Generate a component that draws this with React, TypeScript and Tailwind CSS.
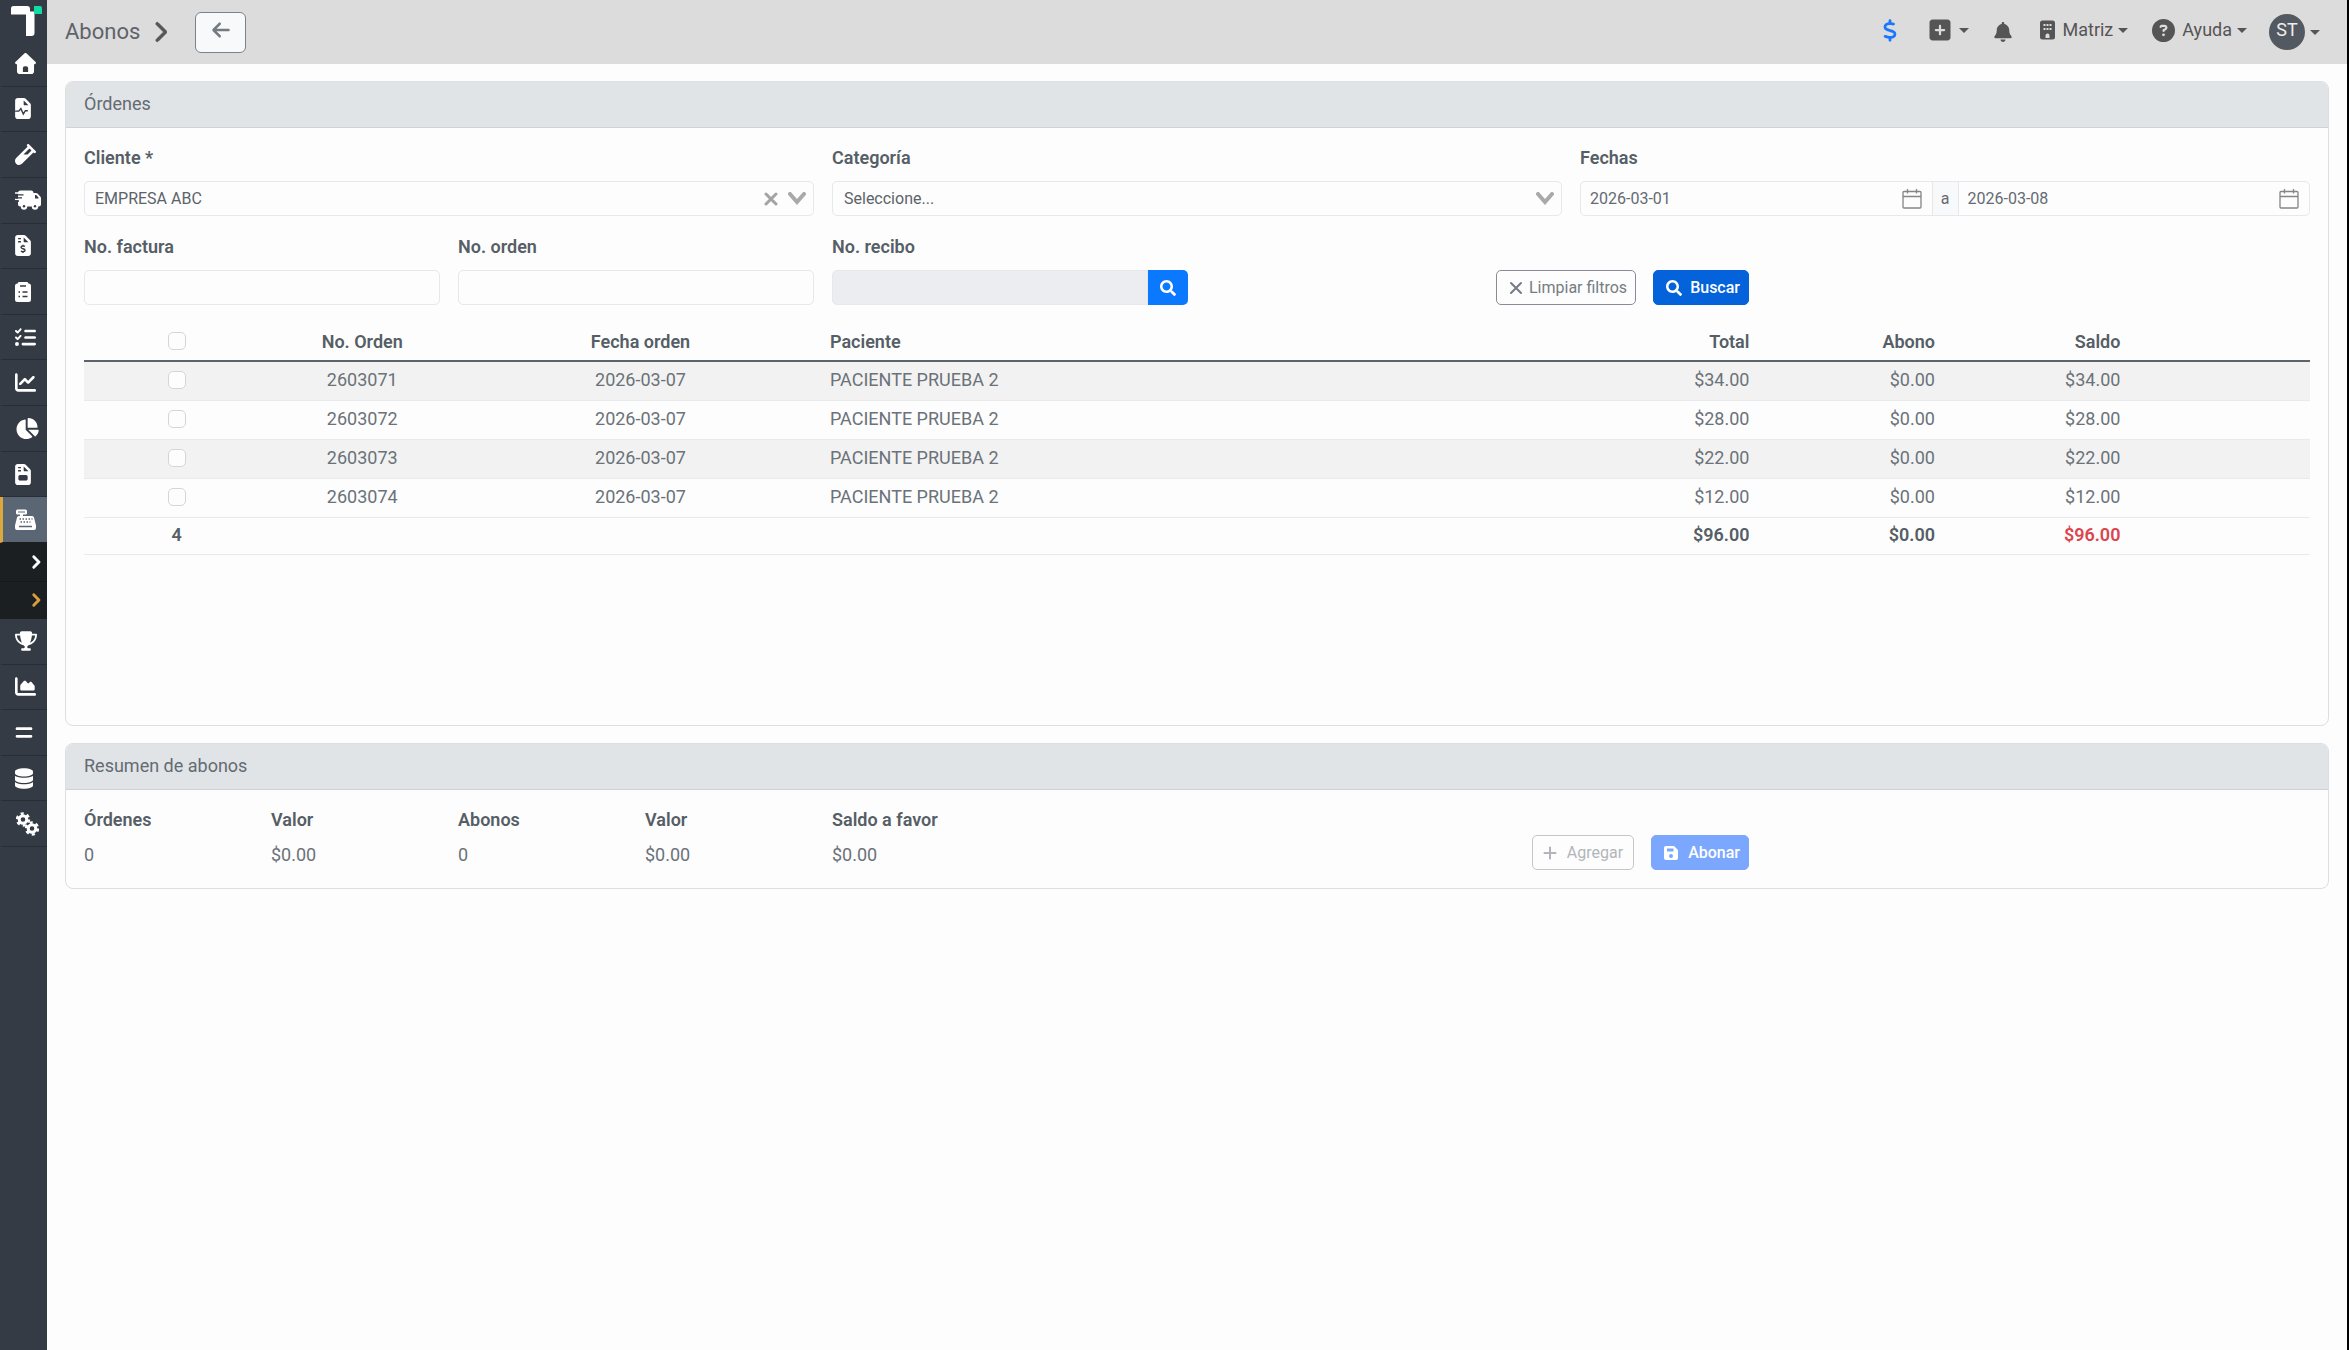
import { useState } from "react"
import type { ReactNode } from "react"
import { FaSearch } from "react-icons/fa"
import {
  FaVial,
  FaListCheck,
  FaChartLine,
  FaChartPie,
  FaChevronRight,
  FaTrophy,
  FaChartArea,
  FaEquals,
  FaDatabase,
  FaArrowLeft,
  FaDollarSign,
  FaSquarePlus,
  FaBell,
  FaCircleQuestion,
  FaPlus,
} from "react-icons/fa6"

interface Order {
  id: string
  date: string
  patient: string
  total: number
  paid: number
}

const orders: Order[] = [
  { id: "2603071", date: "2026-03-07", patient: "PACIENTE PRUEBA 2", total: 34, paid: 0 },
  { id: "2603072", date: "2026-03-07", patient: "PACIENTE PRUEBA 2", total: 28, paid: 0 },
  { id: "2603073", date: "2026-03-07", patient: "PACIENTE PRUEBA 2", total: 22, paid: 0 },
  { id: "2603074", date: "2026-03-07", patient: "PACIENTE PRUEBA 2", total: 12, paid: 0 },
]

const money = (value: number) => `$${value.toFixed(2)}`

const FILE_PATH =
  "M0 64C0 28.7 28.7 0 64 0H213.5c17 0 33.3 6.7 45.3 18.7L365.3 125.3c12 12 18.7 28.3 18.7 45.3V448c0 35.3-28.7 64-64 64H64c-35.3 0-64-28.7-64-64V64zM208 58.5V152c0 13.3 10.7 24 24 24h93.5L208 58.5z"

function FileIcon({ children }: { children: ReactNode }) {
  return (
    <svg viewBox="0 0 384 512" className="h-[21px] w-4" fill="currentColor">
      <path d={FILE_PATH} fillRule="evenodd" />
      <g fill="none" stroke="#353b45">{children}</g>
    </svg>
  )
}

function HouseIcon() {
  return (
    <svg viewBox="0 0 512 512" className="h-[21px] w-[21px]" fill="currentColor">
      <path
        fillRule="evenodd"
        d="M277.8 8.6c-12.3-11.4-31.3-11.4-43.5 0l-224 208c-9.6 9-12.8 22.9-8 35.1S18.8 272 32 272l16 0 0 176c0 35.3 28.7 64 64 64l288 0c35.3 0 64-28.7 64-64l0-176 16 0c13.2 0 25-8.1 29.8-20.3s1.6-26.2-8-35.1l-224-208zM240 320l32 0c26.5 0 48 21.5 48 48l0 96-128 0 0-96c0-26.5 21.5-48 48-48z"
      />
    </svg>
  )
}

function TruckIcon() {
  return (
    <svg viewBox="0 0 26 20" className="h-5 w-[26px] shrink-0" fill="currentColor">
      <path d="M5.5 0.5h10.5a2.5 2.5 0 0 1 2.5 2.5h2.5a2.5 2.5 0 0 1 1.8 0.8l2.4 2.6a2.5 2.5 0 0 1 0.8 1.8V14a2.5 2.5 0 0 1-2.5 2.5H5.5A2.5 2.5 0 0 1 3 14V3A2.5 2.5 0 0 1 5.500 0.500z" />
      <path d="M0 3h8M0 9.500h6" stroke="currentColor" strokeWidth="1.6" strokeLinecap="round" />
      <path d="M0 4.800h8.500M1 7.800h6M0 11h4" stroke="#353b45" strokeWidth="1.300" />
      <path d="M20 5h1.200l2.300 2.500v1H20z" fill="#353b45" />
      <circle cx="9" cy="16.500" r="3.200" />
      <circle cx="20" cy="16.500" r="3.200" />
      <circle cx="9" cy="16.300" r="1.200" fill="#353b45" />
      <circle cx="20" cy="16.300" r="1.200" fill="#353b45" />
    </svg>
  )
}

function ClipboardIcon() {
  return (
    <svg viewBox="0 0 16 20" className="h-5 w-4" fill="currentColor">
      <path d="M3.5 0h9l1 1.500A2.500 2.500 0 0 1 16 4v13.500a2.500 2.500 0 0 1-2.500 2.500h-11A2.500 2.500 0 0 1 0 17.500V4a2.500 2.500 0 0 1 2.500-2.500z" />
      <path d="M5 4h6M3.500 10H5M7.500 10h5M3.500 14.500H5M7.500 14.500h5" stroke="#353b45" strokeWidth="1.500" />
    </svg>
  )
}

function RegisterIcon() {
  return (
    <svg viewBox="0 0 21 21" className="h-[21px] w-[21px]" fill="currentColor">
      <path d="M2.500 0.500h8A1.500 1.500 0 0 1 12 2v2a1.500 1.500 0 0 1-1.500 1.500H8V7h9a2 2 0 0 1 2 1.600l2 8V19a2 2 0 0 1-2 2H2a2 2 0 0 1-2-2v-2.400l2-8A2 2 0 0 1 4 7h1V5.500H2.500A1.500 1.500 0 0 1 1 4V2A1.500 1.500 0 0 1 2.500 0.500z" />
      <path d="M3 3h7" stroke="#5a6673" />
      <path d="M4.500 10h13M5.500 13h10" stroke="#5a6673" strokeWidth="1.500" strokeDasharray="1.500 1.500" />
      <path d="M4 17.500h13" stroke="#5a6673" strokeWidth="1.500" />
    </svg>
  )
}

function Gear({ cx, cy }: { cx: number; cy: number }) {
  return (
    <g fill="none" stroke="currentColor">
      <circle cx={cx} cy={cy} r="3.8" strokeWidth="3" />
      <circle cx={cx} cy={cy} r="6" strokeWidth="2.400" strokeDasharray="3.142" />
    </g>
  )
}

function GearsIcon() {
  return (
    <svg viewBox="0 0 24 24" className="h-6 w-6">
      <Gear cx={8} cy={7.5} />
      <Gear cx={17} cy={16.5} />
    </svg>
  )
}

function BuildingIcon() {
  return (
    <svg viewBox="0 0 15 20" className="h-5 w-[15px]" fill="currentColor">
      <path
        fillRule="evenodd"
        d="M2.500 0.500h10a2.500 2.500 0 0 1 2.500 2.500v14a2.500 2.500 0 0 1-2.500 2.500h-10A2.500 2.500 0 0 1 0 17V3A2.500 2.500 0 0 1 2.500 0.500zM3.500 4v2h2V4zM6.500 4v2h2V4zM9.500 4v2h2V4zM3.500 8v2h2V8zM6.500 8v2h2V8zM9.500 8v2h2V8zM5.500 18h4v-2.500a2 2 0 0 0-4 0z"
      />
    </svg>
  )
}

function SaveIcon() {
  return (
    <svg viewBox="0 0 14 16" className="h-4 w-[14px]" fill="currentColor">
      <path
        fillRule="evenodd"
        d="M2 1h8l4 4v8a2 2 0 0 1-2 2H2a2 2 0 0 1-2-2V3a2 2 0 0 1 2-2zM3 3.500v3h6.500v-3zM7 9a2 2 0 1 0 0 4 2 2 0 0 0 0-4z"
      />
    </svg>
  )
}

function CalendarIcon() {
  return (
    <svg viewBox="0 0 20 20" className="h-5 w-5 shrink-0" fill="none" stroke="#858585" strokeWidth="1.3">
      <rect x="1" y="2.5" width="18" height="16.5" rx="1" />
      <path d="M1 7.5h18M5.5 0v4.5M14.5 0v4.5" />
    </svg>
  )
}

function Arrow() {
  return (
    <svg viewBox="0 0 18 13" className="h-[13px] w-[18px]" fill="none" stroke="#a9a9a9" strokeWidth="4">
      <path d="M2 2l7 8 7-8" strokeLinecap="round" />
    </svg>
  )
}

function Cross({ className }: { className: string }) {
  return (
    <svg viewBox="0 0 14 14" className={className} fill="none" stroke="currentColor" strokeLinecap="round">
      <path d="M2 2l10 10M12 2L2 12" />
    </svg>
  )
}

function Caret() {
  return (
    <svg viewBox="0 0 10 5" className="h-[5px] w-[10px]" fill="currentColor">
      <path d="M0 0h10L5 5z" />
    </svg>
  )
}

function Logo() {
  return (
    <svg viewBox="0 0 32 32" className="h-8 w-8">
      <path d="M2.5 0H16a3 3 0 0 1 3 3v2.5h4.5V27a3 3 0 0 1-3 3H15V8.5H0V2.5A2.5 2.5 0 0 1 2.5 0z" fill="#fff" />
      <path d="M23 0h6a2 2 0 0 1 2 2v6h-8z" fill="#14dba6" />
    </svg>
  )
}

interface NavItem {
  label: string
  icon: ReactNode
  active?: boolean
}

const mainNav: NavItem[] = [
  { label: "Inicio", icon: <HouseIcon /> },
  {
    label: "Resultados",
    icon: (
      <FileIcon>
        <path d="M0 320h90l50-60 60 130 50-80h60" strokeWidth="34" />
      </FileIcon>
    ),
  },
  { label: "Muestras", icon: <FaVial className="h-[21px] w-[21px]" /> },
  { label: "Envíos", icon: <TruckIcon /> },
  {
    label: "Facturas",
    icon: (
      <FileIcon>
        <path d="M72 88h70M72 164h70" strokeWidth="34" />
        <path d="M240 278c-20-14-96-22-96 20 0 48 98 24 98 72 0 42-74 40-102 22M192 236v36M192 400v38" strokeWidth="34" />
      </FileIcon>
    ),
  },
  { label: "Pedidos", icon: <ClipboardIcon /> },
  { label: "Tareas", icon: <FaListCheck className="h-[21px] w-[21px]" /> },
  { label: "Ventas", icon: <FaChartLine className="h-[21px] w-[21px]" /> },
  { label: "Estadísticas", icon: <FaChartPie className="h-[21px] w-6" /> },
  {
    label: "Documentos",
    icon: (
      <FileIcon>
        <path d="M72 88h70M72 164h70" strokeWidth="34" />
        <rect x="92" y="282" width="200" height="110" rx="12" fill="#353b45" strokeWidth="24" />
      </FileIcon>
    ),
  },
  { label: "Caja", icon: <RegisterIcon />, active: true },
]

const lowerNav: NavItem[] = [
  { label: "Metas", icon: <FaTrophy className="h-5 w-[22px]" /> },
  { label: "Reportes", icon: <FaChartArea className="h-[21px] w-[21px]" /> },
  { label: "Conciliación", icon: <FaEquals className="h-[21px] w-[18px]" /> },
  { label: "Datos", icon: <FaDatabase className="h-[21px] w-[18px]" /> },
  { label: "Configuración", icon: <GearsIcon /> },
]

function NavLinks({ items }: { items: NavItem[] }) {
  return (
    <>
      {items.map((item) => (
        <a
          key={item.label}
          href="#"
          aria-label={item.label}
          className={`flex flex-1 items-center border-b pl-3 text-white ${
            item.active ? "border-b-[#1b1f22] border-l-3 border-l-[#dca840] bg-[#5a6673]" : "border-b-[#292e36] border-l-3 border-l-transparent"
          }`}
        >
          {item.icon}
        </a>
      ))}
    </>
  )
}

function Sidebar() {
  return (
    <nav className="w-[47px] shrink-0 bg-[#353b45]">
      <a href="#" aria-label="Panel" className="flex h-[41px] items-start pl-[11px] pt-[6px]">
        <Logo />
      </a>
      <div className="flex h-[502px] flex-col">
        <NavLinks items={mainNav} />
      </div>
      <div className="flex h-[76px] flex-col bg-[#1b1f22]">
        <a href="#" aria-label="Cobros" className="flex flex-1 items-center justify-end border-b border-[#15181b] pr-[7px] text-white">
          <FaChevronRight className="h-[14px] w-[9px] overflow-visible stroke-current stroke-[40]" />
        </a>
        <a href="#" aria-label="Abonos" className="flex flex-1 items-center justify-end pr-[7px] text-[#e0a040]">
          <FaChevronRight className="h-[14px] w-[9px] overflow-visible stroke-current stroke-[40]" />
        </a>
      </div>
      <div className="flex h-[228px] flex-col">
        <NavLinks items={lowerNav} />
      </div>
    </nav>
  )
}

function TopBar() {
  return (
    <header className="flex h-16 items-center justify-between bg-[#dcdcdc] pl-[18px] pr-[27px] text-[#555]">
      <div className="flex items-center">
        <h1 className="text-[22px] leading-8 text-[#5f6368]">Abonos</h1>
        <FaChevronRight className="ml-[13px] h-[22px] w-[14px] stroke-current stroke-[20]" />
        <button
          aria-label="Volver"
          className="ml-7 flex h-[41px] w-[51px] items-center justify-center rounded-md border border-[#7b838a] bg-[#f8f9fb] pb-1 text-[#737a81]"
        >
          <FaArrowLeft className="h-5 w-5" />
        </button>
      </div>
      <div className="flex items-center">
        <button aria-label="Precios" className="pb-1 text-[#1a78ff]">
          <FaDollarSign className="h-[23px] w-[14px]" />
        </button>
        <button aria-label="Nuevo" className="ml-8 flex items-center gap-2 pb-1">
          <FaSquarePlus className="h-6 w-[22px]" />
          <Caret />
        </button>
        <button aria-label="Notificaciones" className="ml-[25px]">
          <FaBell className="h-5 w-[18px]" />
        </button>
        <button className="ml-7 flex items-center pb-1 text-lg">
          <BuildingIcon />
          <span className="ml-2 mr-[5px]">Matriz</span>
          <Caret />
        </button>
        <button className="ml-6 flex items-center pb-1 text-lg">
          <FaCircleQuestion className="h-[23px] w-[23px]" />
          <span className="ml-[7px] mr-[5px]">Ayuda</span>
          <Caret />
        </button>
        <button className="ml-[22px] flex items-center gap-[5px] text-lg">
          <span className="flex h-9 w-9 items-center justify-center rounded-full bg-[#535961] pb-1 text-[#eee]">ST</span>
          <Caret />
        </button>
      </div>
    </header>
  )
}

function Card({ title, children }: { title: string; children: ReactNode }) {
  return (
    <section className="rounded-lg border border-[#dcdee0]">
      <h2 className="rounded-t-[7px] border-b border-[#cfd3d6] bg-[#e1e4e7] px-[18px] pb-[10px] pt-2 text-lg leading-[27px] text-[#646b72]">
        {title}
      </h2>
      {children}
    </section>
  )
}

const labelClass = "mb-[10px] block text-lg font-semibold leading-[27px] text-[#565e66]"
const fieldClass = "h-[35px] w-full rounded-[5px] border border-[#e6e8eb] bg-[#fdfdfd] text-base text-[#5c636a] outline-none"
const buttonClass = "flex h-[35px] items-center rounded-[5px] border text-base"
const checkClass = "mx-auto block h-[18px] w-[18px] appearance-none rounded-[5px] border border-[#d3d6d9] bg-[#fdfdfd] checked:bg-[#0a78ff]"

function Filters() {
  const [client, setClient] = useState("abc")
  const [from, setFrom] = useState("2026-03-01")
  const [to, setTo] = useState("2026-03-08")

  return (
    <form className="grid grid-cols-12 gap-x-[18px] gap-y-[17px]" onSubmit={(e) => e.preventDefault()}>
      <div className="col-span-4">
        <label htmlFor="cliente" className={labelClass}>Cliente *</label>
        <div className="relative">
          <select id="cliente" value={client} onChange={(e) => setClient(e.target.value)} className={`${fieldClass} appearance-none px-[10px]`}>
            <option value="">Seleccione...</option>
            <option value="abc">EMPRESA ABC</option>
          </select>
          <div className="pointer-events-none absolute inset-y-0 right-2 flex items-center gap-[10px]">
            <button type="button" aria-label="Quitar cliente" onClick={() => setClient("")} className="pointer-events-auto text-[#a3a3a3]">
              <Cross className="h-[14px] w-[14px] stroke-3" />
            </button>
            <Arrow />
          </div>
        </div>
      </div>
      <div className="col-span-4">
        <label htmlFor="categoria" className={labelClass}>Categoría</label>
        <div className="relative">
          <select id="categoria" className={`${fieldClass} appearance-none px-[11px]`}>
            <option>Seleccione...</option>
          </select>
          <div className="pointer-events-none absolute inset-y-0 right-2 flex items-center">
            <Arrow />
          </div>
        </div>
      </div>
      <div className="col-span-4">
        <label htmlFor="desde" className={labelClass}>Fechas</label>
        <div className="flex h-[35px] rounded-[5px] border border-[#e6e8eb] text-base text-[#646b72]">
          <div className="flex flex-1 items-center pl-[9px] pr-[10px]">
            <input id="desde" value={from} onChange={(e) => setFrom(e.target.value)} className="w-full min-w-0 outline-none" />
            <CalendarIcon />
          </div>
          <span className="flex w-[27px] items-center justify-center border-x border-[#e6e8eb] bg-[#f8f9fb]">a</span>
          <div className="flex flex-1 items-center pl-[9px] pr-[10px]">
            <input aria-label="Fecha hasta" value={to} onChange={(e) => setTo(e.target.value)} className="w-full min-w-0 outline-none" />
            <CalendarIcon />
          </div>
        </div>
      </div>

      <div className="col-span-2">
        <label htmlFor="factura" className={labelClass}>No. factura</label>
        <input id="factura" className={`${fieldClass} px-[10px]`} />
      </div>
      <div className="col-span-2">
        <label htmlFor="orden" className={labelClass}>No. orden</label>
        <input id="orden" className={`${fieldClass} px-[10px]`} />
      </div>
      <div className="col-span-2">
        <label htmlFor="recibo" className={labelClass}>No. recibo</label>
        <div className="flex">
          <input id="recibo" disabled className="h-[35px] min-w-0 flex-1 rounded-l-[5px] border border-[#e6e8eb] bg-[#ebedf0] px-[10px]" />
          <button type="button" aria-label="Buscar recibo" className="flex h-[35px] w-10 items-center justify-center rounded-r-[5px] bg-[#0a78ff] text-white">
            <FaSearch className="h-4 w-4" />
          </button>
        </div>
      </div>
      <div className="col-span-3 flex items-end justify-end gap-[17px]">
        <button type="button" className={`${buttonClass} gap-[6px] border-[#868d94] pl-3 pr-2 text-[#757c83]`}>
          <Cross className="h-[14px] w-[14px] stroke-2" />
          Limpiar filtros
        </button>
        <button className={`${buttonClass} gap-2 border-[#0462da] bg-[#0462da] pl-3 pr-2 font-medium text-white`}>
          <FaSearch className="h-4 w-4" />
          Buscar
        </button>
      </div>
    </form>
  )
}

function OrdersTable() {
  const [selected, setSelected] = useState<string[]>([])
  const total = orders.reduce((sum, o) => sum + o.total, 0)
  const paid = orders.reduce((sum, o) => sum + o.paid, 0)

  const toggle = (id: string) => {
    setSelected(selected.includes(id) ? selected.filter((s) => s !== id) : [...selected, id])
  }

  return (
    <table className="w-full table-fixed border-collapse text-lg leading-[27px] text-[#6b7279]">
      <colgroup>
        <col className="w-1/12" />
        <col className="w-1/12" />
        <col className="w-2/12" />
        <col className="w-4/12" />
        <col className="w-1/12" />
        <col className="w-1/12" />
        <col className="w-1/12" />
        <col className="w-1/12" />
      </colgroup>
      <thead>
        <tr className="h-[39px] border-b-2 border-[#5d636a] text-[#565e66] [&>th]:px-1 [&>th]:font-semibold">
          <th>
            <input
              type="checkbox"
              aria-label="Seleccionar todas"
              checked={selected.length === orders.length}
              onChange={() => setSelected(selected.length === orders.length ? [] : orders.map((o) => o.id))}
              className={checkClass}
            />
          </th>
          <th>No. Orden</th>
          <th>Fecha orden</th>
          <th className="text-left">Paciente</th>
          <th className="text-right">Total</th>
          <th className="text-right">Abono</th>
          <th className="text-right">Saldo</th>
          <th />
        </tr>
      </thead>
      <tbody>
        {orders.map((order) => (
          <tr key={order.id} className="h-[39px] border-b border-[#e8eaec] odd:bg-[#f2f2f2] [&>td]:px-1 [&>td]:pb-[2px]">
            <td>
              <input
                type="checkbox"
                aria-label={`Seleccionar ${order.id}`}
                checked={selected.includes(order.id)}
                onChange={() => toggle(order.id)}
                className={checkClass}
              />
            </td>
            <td className="text-center">{order.id}</td>
            <td className="text-center">{order.date}</td>
            <td>{order.patient}</td>
            <td className="text-right">{money(order.total)}</td>
            <td className="text-right">{money(order.paid)}</td>
            <td className="text-right">{money(order.total - order.paid)}</td>
            <td />
          </tr>
        ))}
      </tbody>
      <tfoot>
        <tr className="h-[37px] border-b border-[#e8eaec] font-semibold text-[#565e66] [&>td]:px-1 [&>td]:pb-[2px]">
          <td className="text-center">{orders.length}</td>
          <td colSpan={3} />
          <td className="text-right">{money(total)}</td>
          <td className="text-right">{money(paid)}</td>
          <td className="text-right text-[#dc4450]">{money(total - paid)}</td>
          <td />
        </tr>
      </tfoot>
    </table>
  )
}

const summary = [
  { label: "Órdenes", value: "0" },
  { label: "Valor", value: "$0.00" },
  { label: "Abonos", value: "0" },
  { label: "Valor", value: "$0.00" },
  { label: "Saldo a favor", value: "$0.00" },
]

function Summary() {
  return (
    <div className="grid grid-cols-12 gap-x-[18px] px-[18px] pb-[18px] pt-4">
      {summary.map((item, index) => (
        <dl key={index} className="h-16 text-lg text-[#6b7279]">
          <dt className={labelClass}>{item.label}</dt>
          <dd className="leading-6">{item.value}</dd>
        </dl>
      ))}
      <div className="col-span-4 flex items-end justify-end gap-[17px]">
        <button disabled className={`${buttonClass} gap-[10px] border-[#c3c6c9] px-[10px] text-[#b2b6ba]`}>
          <FaPlus className="h-4 w-[14px]" />
          Agregar
        </button>
        <button disabled className={`${buttonClass} gap-[10px] border-[#7ba7ff] bg-[#7ba7ff] pl-3 pr-2 font-medium text-white`}>
          <SaveIcon />
          Abonar
        </button>
      </div>
    </div>
  )
}

export default function App() {
  return (
    <div className="flex min-h-screen border-r-2 border-black bg-[#fdfdfd] font-['Roboto',sans-serif]">
      <Sidebar />
      <div className="min-w-0 flex-1">
        <TopBar />
        <main className="flex flex-col gap-[17px] px-[18px] py-[17px]">
          <Card title="Órdenes">
            <div className="flex flex-col gap-[17px] px-[18px] py-4">
              <Filters />
              <div className="h-[387px] overflow-y-auto">
                <OrdersTable />
              </div>
            </div>
          </Card>
          <Card title="Resumen de abonos">
            <Summary />
          </Card>
        </main>
      </div>
    </div>
  )
}
